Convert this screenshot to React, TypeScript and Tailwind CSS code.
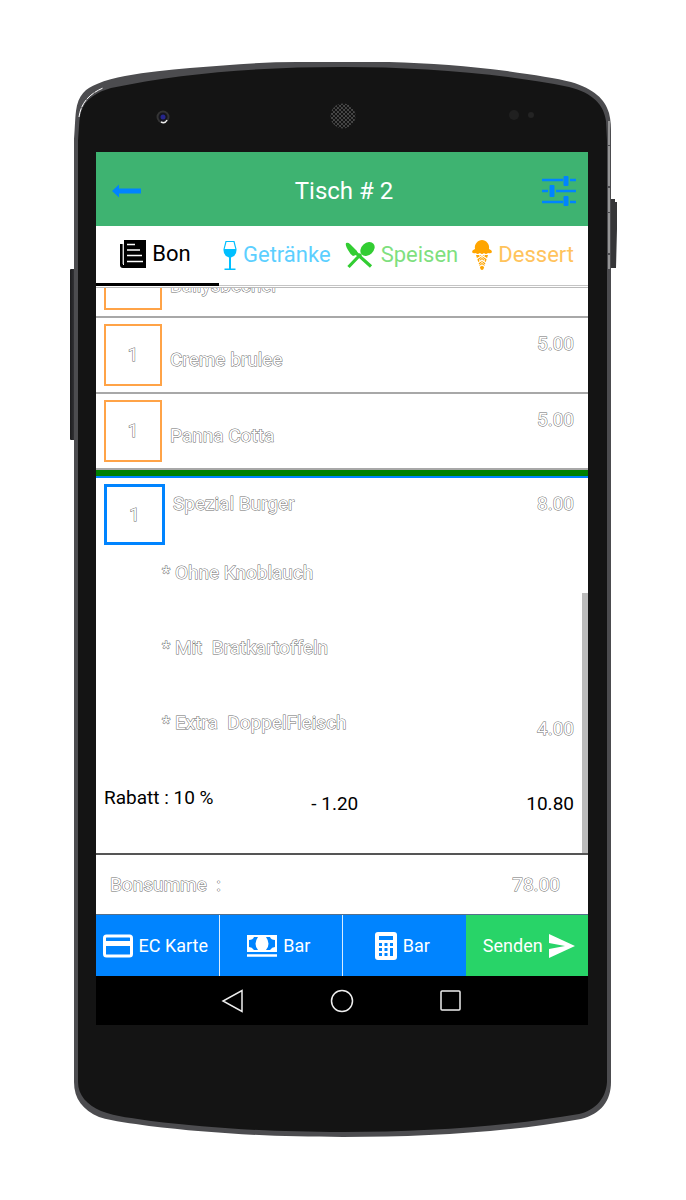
import type { ReactNode } from "react";

const outline = "text-white [-webkit-text-stroke:1px_#6b6b6b] [paint-order:stroke_fill]";

function Device() {
  return (
    <svg className="absolute inset-0 h-full w-full" viewBox="0 0 548 1076" preserveAspectRatio="none" aria-hidden="true">
      <defs>
        <pattern id="mesh" width="4" height="4" patternUnits="userSpaceOnUse">
          <rect width="4" height="4" fill="#484848" />
          <circle cx="1" cy="1" r="1.2" fill="#111" />
          <circle cx="3" cy="3" r="1.2" fill="#111" />
        </pattern>
        <linearGradient id="key" x1="0" x2="1">
          <stop offset="0" stopColor="#1c1c1e" />
          <stop offset="1" stopColor="#3c3c3f" />
        </linearGradient>
      </defs>
      <rect x="1" y="208" width="6" height="171" rx="1" fill="url(#key)" />
      <path d="M541 138H546V141H548V168L547 207H541Z" fill="#363638" />
      <path
        d="M5 78C6 66 6 58 7 50C9 34 17 27 28 23C37 19 46 17 56 15C78 11 99 9 121 7C157 4 192 1 228 1H320C360 2 400 5 438 10C465 14 488 17 502 21C525 28 536 38 540 52C542 60 542 66 542 74V1021C542 1040 532 1053 512 1058C440 1071 360 1076 274 1076C200 1076 140 1072 80 1065C62 1062 46 1061 30 1056C14 1049 5 1038 5 1021Z"
        fill="#4c4c4f"
      />
      <path
        d="M9 80C10 68 10 58 12 51C16 38 28 31 42 27C112 12 190 6 274 6C350 6 430 12 500 26C524 32 535 44 537 60L538 80V1021C537 1037 527 1049 510 1053C440 1065 360 1071 274 1071C200 1071 140 1067 82 1060C64 1057 48 1056 32 1050C18 1044 9 1034 9 1021Z"
        fill="#141414"
      />
      <path d="M10 56C12 42 20 33 34 27" fill="none" stroke="#fff" strokeWidth="1" strokeDasharray="9 1" />
      <path d="M540 60V208" stroke="#ddd" strokeWidth="1" strokeDasharray="24 1 40 2" />
      <circle cx="94" cy="56" r="6.500" fill="#343434" />
      <circle cx="94" cy="56" r="4.500" fill="#15151d" />
      <circle cx="94" cy="56" r="2.500" fill="#26268c" />
      <path d="M92 61Q96 63 98 59" fill="none" stroke="#eee" strokeWidth="1.5" />
      <circle cx="274" cy="55" r="12.500" fill="url(#mesh)" />
      <circle cx="445" cy="54" r="5" fill="#202020" />
      <circle cx="462" cy="54" r="3" fill="#242424" />
    </svg>
  );
}

function ReceiptIcon() {
  return (
    <svg className="h-7.5 w-6.5 shrink-0" viewBox="0 0 26 30" aria-hidden="true">
      <path d="M4 1H26V29H3Q0 29 0 26V5H3V26H4Z" fill="#000" />
      <path d="M3 5V25" stroke="#bbb" />
      <path d="M7 5.500H15M7 11H20M7 16.500H22M7 22.500H23" stroke="#fff" strokeWidth="1.4" />
    </svg>
  );
}

function WineIcon() {
  return (
    <svg className="h-7.5 w-3.5 shrink-0" viewBox="0 0 14 30" aria-hidden="true">
      <path d="M2.500 1H11.500L13.500 9Q14 16 8 17.500V28.500H12.500V30H1.500V28.500H6V17.500Q0 16 .5 9Z" fill="#00bfff" />
      <path d="M3.500 2H10.500L12.300 9H1.700Z" fill="#fff" />
    </svg>
  );
}

function CutleryIcon() {
  return (
    <svg className="h-7 w-7.5 shrink-0" viewBox="0 0 30 28" aria-hidden="true">
      <path d="M1 2Q3 1 5 3L12 10Q13 12 11 14L8 15Q5 13 3 9Q0 4 1 2Z" fill="#32cd32" />
      <path d="M11 12L26 25.500M16 13L3.500 26" stroke="#32cd32" strokeWidth="3.2" />
      <ellipse cx="22.500" cy="8" rx="8" ry="6" transform="rotate(-42 22.500 8)" fill="#32cd32" />
    </svg>
  );
}

function ConeIcon() {
  return (
    <svg className="h-7.5 w-5 shrink-0" viewBox="0 0 20 30" aria-hidden="true">
      <path d="M3 9C2 4 6 0 10 0S18 4 17 9Q20 10 20 12Q19 14 16 13Q14 15 12 13Q10 15 8 13Q5 15 4 13Q1 14 0 12Q0 10 3 9Z" fill="#ffa500" />
      <path d="M4 15H16L11.500 29Q10 31 8.500 29Z" fill="#ffa500" />
      <path d="M3 20L10 15.500L17 20M4 24.500L10 20L16 24.500M5 28L10 25L15 28" fill="none" stroke="#fff" strokeWidth="1.1" />
      <path d="M7 15L13 20L7 25M13 15L7 20L13 25" fill="none" stroke="#fff" strokeWidth=".7" />
    </svg>
  );
}

function SlidersIcon() {
  return (
    <svg className="h-7.5 w-8.5" viewBox="0 0 34 30" aria-hidden="true">
      <path d="M0 4H21M28 4H34M0 15H6M14 15H34M0 26H21M28 26H34" stroke="#0084ff" strokeWidth="2.6" />
      <path d="M22 .5H26V9.500H22ZM8 9.500H12V20.500H8ZM22 20.500H26V29.500H22Z" fill="#0084ff" stroke="#0084ff" />
    </svg>
  );
}

type TabProps = { icon: ReactNode; label: string; color: string; active?: boolean };

function Tab({ icon, label, color, active }: TabProps) {
  return (
    <button
      type="button"
      role="tab"
      aria-selected={!!active}
      className={`flex items-center justify-center gap-1.5 text-[22px] ${color} ${
        active ? "w-1/4 border-b-3 border-black" : ""
      }`}
    >
      {icon}
      {label}
    </button>
  );
}

function Item({ name, price }: { name: string; price: string }) {
  return (
    <li className="flex h-19 items-start border-b-2 border-[#a8a8a8] px-2 pt-1.5">
      <span className={`flex h-15.5 w-14.5 items-center justify-center border-2 border-[#ffa347] text-[19px] leading-6 ${outline}`}>1</span>
      <span className={`mt-6 ml-2 flex-1 text-[19px] leading-6 ${outline}`}>{name}</span>
      <span className={`mt-2 mr-1.5 text-[19px] leading-6 ${outline}`}>{price}</span>
    </li>
  );
}

function Extra({ name, price }: { name: string; price?: string }) {
  return (
    <li className="flex h-[75px] items-start pr-3.5 pl-16.5">
      <span className={`flex-1 text-[19px] leading-6 whitespace-pre ${outline}`}>{name}</span>
      {price && <span className={`mt-1.5 text-[19px] leading-6 ${outline}`}>{price}</span>}
    </li>
  );
}

const payButton = "flex h-full flex-1 items-center justify-center gap-1.5 text-lg text-white";

export default function App() {
  return (
    <main className="flex min-h-screen items-start justify-center bg-white px-[69px] pt-[61px] font-['Roboto',sans-serif]">
      <div className="relative w-full max-w-[548px] pt-[91px] pr-[29px] pb-[112px] pl-[27px]">
        <Device />
        <div className="relative bg-white">
          <header className="flex h-[74px] items-center justify-between bg-[#3eb371] pr-3 pl-4">
            <button type="button" aria-label="Zurück" className="flex w-8.5 pt-1">
              <svg className="h-3.5 w-7.5" viewBox="0 0 30 14" aria-hidden="true">
                <path d="M0 7L7 .5V4.500H29V9.500H7V13.500Z" fill="#0084ff" />
              </svg>
            </button>
            <h1 className="pt-1 text-2xl text-white">Tisch # 2</h1>
            <button type="button" aria-label="Einstellungen" className="pt-1">
              <SlidersIcon />
            </button>
          </header>

          <div role="tablist" className="flex h-15">
            <Tab active icon={<ReceiptIcon />} label="Bon" color="text-black pb-0.5 pr-1" />
            <div className="flex flex-1 justify-between border-b border-[#c4c4c4] pr-3.5 pb-0.5 pl-1">
              <Tab icon={<WineIcon />} label="Getränke" color="text-[#5ccfff]" />
              <Tab icon={<CutleryIcon />} label="Speisen" color="text-[#7fdf7f]" />
              <Tab icon={<ConeIcon />} label="Dessert" color="text-[#ffc35c]" />
            </div>
          </div>

          <section aria-label="Bestellung" className="relative mt-px h-[566px] overflow-hidden border-t border-[#bbb]">
            <ul>
              <li className="flex h-[30px] items-end overflow-hidden border-b-2 border-[#a8a8a8] px-2 pb-1.5">
                <span className="flex h-15.5 w-14.5 shrink-0 border-2 border-[#ffa347]" />
                <span className={`mb-3 ml-2 text-[19px] leading-6 ${outline}`}>Bailysbecher</span>
              </li>
              <Item name="Creme brulee" price="5.00" />
              <Item name="Panna Cotta" price="5.00" />
            </ul>
            <div className="h-2 border-b-2 border-[#0084ff] bg-[#008000]" />
            <div className="flex h-[83px] items-start px-2 pt-1.5">
              <span className={`flex h-[61px] w-[61px] items-center justify-center border-3 border-[#0084ff] text-[19px] leading-6 ${outline}`}>1</span>
              <span className={`mt-2 ml-2 flex-1 text-[19px] leading-6 ${outline}`}>Spezial Burger</span>
              <span className={`mt-2 mr-1.5 text-[19px] leading-6 ${outline}`}>8.00</span>
            </div>
            <ul>
              <Extra name="* Ohne Knoblauch" />
              <Extra name="* Mit  Bratkartoffeln" />
              <Extra name="* Extra  DoppelFleisch" price="4.00" />
            </ul>
            <div className="flex items-start pr-3.5 pl-2 text-[19px] leading-6 text-black">
              <span className="flex-1">Rabatt : 10 %</span>
              <span className="mt-1.5 w-1/2 pl-5">- 1.20</span>
              <span className="mt-1.5">10.80</span>
            </div>
            <div className="absolute right-0 bottom-0 h-[260px] w-1.5 bg-[#bbb]" />
          </section>

          <div className={`flex h-[61px] items-center justify-between border-t-2 border-[#555] pt-0.5 pr-7 pl-3.5 text-[19px] ${outline}`}>
            <span className="whitespace-pre">Bonsumme  :</span>
            <span>78.00</span>
          </div>

          <div className="flex h-[62px] border-t border-[#55708c]">
            <button type="button" className={`${payButton} border-r border-[#d8ecff] bg-[#0084ff] pr-1`}>
              <svg className="h-6 w-7.5" viewBox="0 0 30 24" aria-hidden="true">
                <rect x="1.500" y="2" width="27" height="20" rx="2" fill="none" stroke="#fff" strokeWidth="3" />
                <path d="M2 9.500H28" stroke="#fff" strokeWidth="5" />
              </svg>
              EC Karte
            </button>
            <button type="button" className={`${payButton} border-r border-[#d8ecff] bg-[#0084ff] pr-1`}>
              <svg className="h-5.5 w-7.5" viewBox="0 0 30 22" aria-hidden="true">
                <path d="M0 0H30V17H0Z" fill="#fff" />
                <path d="M7 2H11Q6 9 11 15H7Q5 12 2 12V5Q6 5 7 2ZM23 2H19Q24 9 19 15H23Q25 12 28 12V5Q24 5 23 2Z" fill="#0084ff" />
                <path d="M0 20.500H30" stroke="#fff" strokeWidth="2.500" />
              </svg>
              Bar
            </button>
            <button type="button" className={`${payButton} bg-[#0084ff] pr-1`}>
              <svg className="h-7 w-5.5" viewBox="0 0 22 28" aria-hidden="true">
                <rect x="0" y="0" width="22" height="28" rx="3" fill="#fff" />
                <path d="M4 4H18V8H4ZM4 11H7V14H4ZM9.500 11H12.500V14H9.500ZM15 11H18V14H15ZM4 16H7V19H4ZM9.500 16H12.500V19H9.500ZM4 21H7V24H4ZM9.500 21H12.500V24H9.500ZM15 16H18V24H15Z" fill="#0084ff" />
              </svg>
              Bar
            </button>
            <button type="button" className={`${payButton} bg-[#28d468] pl-1`}>
              Senden
              <svg className="h-6 w-6.5" viewBox="0 0 26 24" aria-hidden="true">
                <path d="M0 0L26 12L0 24V15L16 12L0 9Z" fill="#fff" />
              </svg>
            </button>
          </div>

          <nav className="flex h-[49px] items-center justify-center gap-[85px] bg-black" aria-label="System">
            <button type="button" aria-label="Zurück">
              <svg className="h-6 w-6" viewBox="0 0 24 24" fill="none" stroke="#eee" strokeWidth="1.5" aria-hidden="true">
                <path d="M21 1.500V22.500L2 12Z" />
              </svg>
            </button>
            <button type="button" aria-label="Start">
              <svg className="h-6 w-6" viewBox="0 0 24 24" fill="none" stroke="#eee" strokeWidth="1.5" aria-hidden="true">
                <circle cx="12" cy="12" r="10.500" />
              </svg>
            </button>
            <button type="button" aria-label="Übersicht">
              <svg className="h-6 w-6" viewBox="0 0 24 24" fill="none" stroke="#eee" strokeWidth="1.5" aria-hidden="true">
                <rect x="2" y="2" width="19" height="19" rx="1" />
              </svg>
            </button>
          </nav>
        </div>
      </div>
    </main>
  );
}
